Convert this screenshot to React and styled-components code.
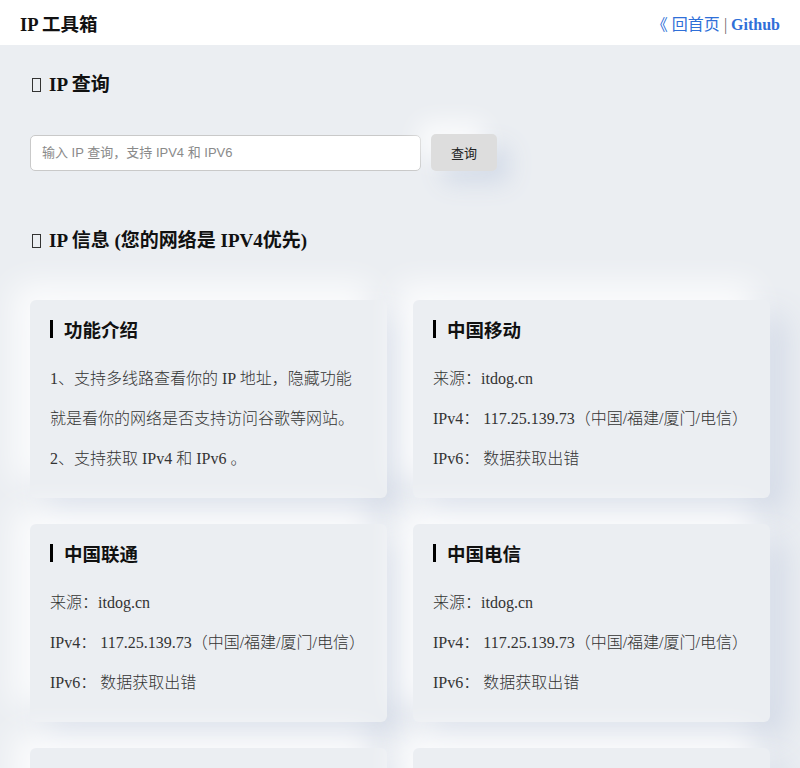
import React from 'react';
import styled, { createGlobalStyle } from 'styled-components';

const GlobalStyle = createGlobalStyle`
  html, body {
    margin: 0;
    padding: 0;
    background: #ebeef2;
    font-family: "Liberation Serif", "Noto Sans CJK SC", serif;
  }
`;

const Header = styled.header`
  display: flex;
  justify-content: space-between;
  align-items: center;
  height: 45px;
  padding: 0 20px;
  background: #fff;
`;

const Brand = styled.h1`
  margin: 0;
  font-size: 18.5px;
  font-weight: bold;
  color: #111;
`;

const Nav = styled.nav`
  font-size: 16px;
  color: #666;
`;

const NavLink = styled.a`
  color: #2f6fd8;
  text-decoration: none;
  font-weight: ${p => (p.$bold ? 'bold' : 'normal')};
`;

const Main = styled.main`
  padding: 28px 30px 30px;
`;

const SectionTitle = styled.h2`
  display: flex;
  align-items: center;
  gap: 8px;
  margin: 0;
  padding-left: 2px;
  font-size: 19px;
  line-height: 24px;
  font-weight: bold;
  color: #111;
`;

/* missing-glyph box, as the emoji shows without an emoji font */
const Tofu = styled.span`
  display: inline-block;
  box-sizing: border-box;
  width: 9px;
  height: 14px;
  border: 1px solid #333;
`;

const SearchRow = styled.div`
  display: flex;
  align-items: center;
  gap: 10px;
  margin: 37px 0 58px;
`;

const Input = styled.input`
  box-sizing: border-box;
  width: 391px;
  height: 36px;
  padding: 0 11px;
  border: 1px solid #c9c9c9;
  border-radius: 5px;
  background: #fff;
  font-family: "Liberation Sans", "Noto Sans CJK SC", sans-serif;
  font-size: 13px;
  outline: none;
  &::placeholder {
    color: #8a8a8a;
  }
`;

const Button = styled.button`
  width: 66px;
  height: 37px;
  border: none;
  border-radius: 5px;
  background: #dddddd;
  color: #222;
  font-family: "Liberation Sans", "Noto Sans CJK SC", sans-serif;
  font-size: 13px;
  box-shadow: -12px -12px 24px rgba(255, 255, 255, 0.8), 12px 12px 24px #d3dbe8;
`;

const Grid = styled.div`
  display: grid;
  grid-template-columns: 1fr 1fr;
  gap: 26px;
  margin-top: 47px;
`;

const Card = styled.section`
  padding: 20px 20px 19px;
  border-radius: 6px;
  background: #ebeef2;
  box-shadow: -16px -16px 32px rgba(255, 255, 255, 0.85), 16px 16px 32px #d3dae7;
`;

const CardTitle = styled.h3`
  margin: 0 0 21px;
  padding-left: 11px;
  border-left: 3px solid #000;
  font-family: "Noto Sans CJK SC", sans-serif;
  font-size: 18.5px;
  line-height: 18px;
  font-weight: 600;
  color: #111;
`;

const Line = styled.p`
  margin: 0;
  font-size: 16px;
  line-height: 40px;
  font-weight: 300;
  color: #333;
  white-space: nowrap;
`;

const Wrap = styled(Line)`
  white-space: normal;
`;

const isps = [
  { name: '中国移动' },
  { name: '中国联通' },
  { name: '中国电信' },
  { name: '中国广电' },
  { name: '海外线路' },
];

function IspCard({ name }) {
  return (
    <Card>
      <CardTitle>{name}</CardTitle>
      <Line>来源：itdog.cn</Line>
      <Line>IPv4： 117.25.139.73（中国/福建/厦门/电信）</Line>
      <Line>IPv6： 数据获取出错</Line>
    </Card>
  );
}

export default function App() {
  return (
    <>
      <GlobalStyle />
      <Header>
        <Brand>IP 工具箱</Brand>
        <Nav>
          <NavLink href="#">《 回首页</NavLink> | <NavLink href="#" $bold>Github</NavLink>
        </Nav>
      </Header>
      <Main>
        <SectionTitle><Tofu />IP 查询</SectionTitle>
        <SearchRow>
          <Input placeholder="输入 IP 查询，支持 IPV4 和 IPV6" />
          <Button>查询</Button>
        </SearchRow>
        <SectionTitle><Tofu />IP 信息 (您的网络是 IPV4优先)</SectionTitle>
        <Grid>
          <Card>
            <CardTitle>功能介绍</CardTitle>
            <Wrap>1、支持多线路查看你的 IP 地址，隐藏功能就是看你的网络是否支持访问谷歌等网站。</Wrap>
            <Line>2、支持获取 IPv4 和 IPv6 。</Line>
          </Card>
          {isps.map(isp => (
            <IspCard key={isp.name} name={isp.name} />
          ))}
        </Grid>
      </Main>
    </>
  );
}
